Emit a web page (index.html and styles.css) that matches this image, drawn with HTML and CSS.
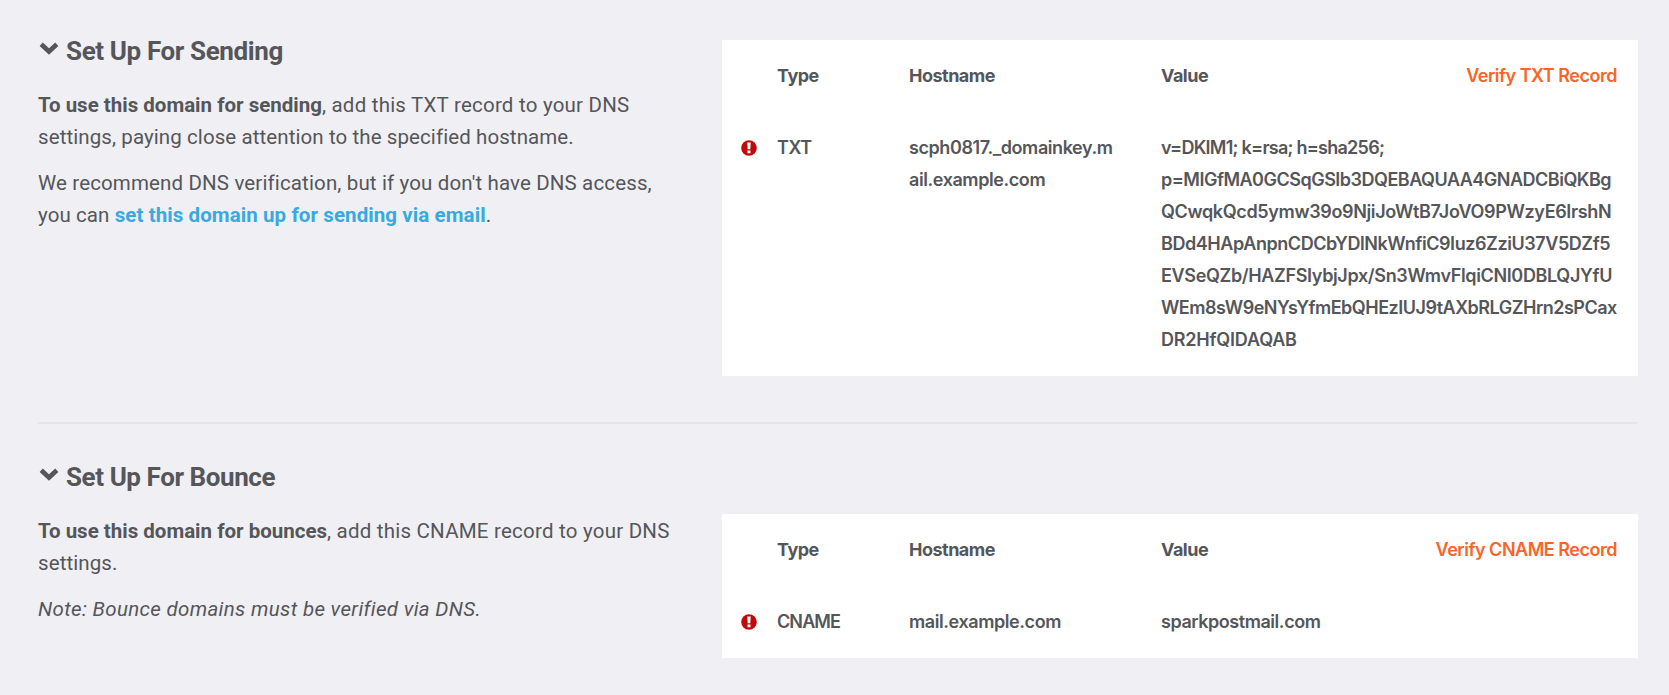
FILE: index.html
```html
<!DOCTYPE html>
<html lang="en">
<head>
<meta charset="utf-8">
<title>Domain setup</title>
<link rel="stylesheet" href="styles.css">
</head>
<body>
<main class="page">
  <section class="setup">
    <div class="info">
      <h2 class="title title-sending"><svg class="chevron" width="20" height="13" viewBox="0 0 20 13"><path d="M2.2 2.2 10 9.5 17.8 2.2" fill="none" stroke="currentColor" stroke-width="4.6" stroke-linecap="butt"/></svg>Set Up For Sending</h2>
      <p class="text"><strong>To use this domain for sending</strong><span class="loose">, add this TXT record to your DNS</span><br><span class="even">settings, paying close attention to the specified hostname.</span></p>
      <p class="text"><span class="mid">We recommend DNS verification, but if you don't have DNS access,</span><br><span class="even">you can </span><a class="link" href="#">set this domain up for sending via email</a>.</p>
    </div>
    <div class="card">
      <div class="row head">
        <span></span><span>Type</span><span>Hostname</span><span>Value</span><a class="verify" href="#">Verify TXT Record</a>
      </div>
      <div class="row">
        <svg class="alert" width="16" height="16" viewBox="0 0 16 16"><circle cx="8" cy="8" r="7.8" fill="#c20a0c"/><path d="M6.3 2.6h3.4l-.4 6.7H6.7zM6.5 10.6h3v2.7h-3z" fill="#fff"/></svg>
        <span>TXT</span>
        <span class="host">scph0817._domainkey.m<br>ail.example.com</span>
        <span class="value"><span class="intro">v=DKIM1; k=rsa; h=sha256;</span><br><span class="k1">p=MIGfMA0GCSqGSIb3DQEBAQUAA4GNADCBiQKBg</span><br><span class="k2">QCwqkQcd5ymw39o9NjiJoWtB7JoVO9PWzyE6IrshN</span><br><span class="k3">BDd4HApAnpnCDCbYDlNkWnfiC9Iuz6ZziU37V5DZf5</span><br><span class="k2">EVSeQZb/HAZFSIybjJpx/Sn3WmvFlqiCNI0DBLQJYfU</span><br><span class="k1">WEm8sW9eNYsYfmEbQHEzIUJ9tAXbRLGZHrn2sPCax</span><br><span class="k4">DR2HfQIDAQAB</span></span>
      </div>
    </div>
  </section>
  <hr class="rule">
  <section class="setup bounce">
    <div class="info">
      <h2 class="title title-bounce"><svg class="chevron" width="20" height="13" viewBox="0 0 20 13"><path d="M2.2 2.2 10 9.5 17.8 2.2" fill="none" stroke="currentColor" stroke-width="4.6" stroke-linecap="butt"/></svg>Set Up For Bounce</h2>
      <p class="text"><strong>To use this domain for bounces</strong><span class="loose">, add this CNAME record to your DNS</span><br><span class="even">settings.</span></p>
      <p class="text note">Note: Bounce domains must be verified via DNS.</p>
    </div>
    <div class="card">
      <div class="row head">
        <span></span><span>Type</span><span>Hostname</span><span>Value</span><a class="verify" href="#">Verify CNAME Record</a>
      </div>
      <div class="row">
        <svg class="alert" width="16" height="16" viewBox="0 0 16 16"><circle cx="8" cy="8" r="7.8" fill="#c20a0c"/><path d="M6.3 2.6h3.4l-.4 6.7H6.7zM6.5 10.6h3v2.7h-3z" fill="#fff"/></svg>
        <span class="cname">CNAME</span>
        <span class="host">mail.example.com</span>
        <span class="value mail">sparkpostmail.com</span>
      </div>
    </div>
  </section>
</main>
</body>
</html>
```
FILE: styles.css
```css
* { box-sizing: border-box; }

body {
  margin: 0;
  background: #f0eff4;
  color: #55565a;
  font-family: Roboto, "Open Sans", sans-serif;
}

a { text-decoration: none; }

.page { padding: 40px 31px 0 38px; }

.setup {
  display: grid;
  grid-template-columns: 684px 1fr;
  align-items: start;
}

.rule {
  height: 2px;
  margin: 46px 0 42px;
  border: 0;
  background: #e5e5e7;
}

.title {
  display: flex;
  align-items: flex-start;
  margin: -5px 0 22px;
  font-size: 26px;
  font-weight: 700;
  line-height: 32px;
}

.title-sending { letter-spacing: -0.38px; }
.title-bounce { letter-spacing: -0.42px; }

.chevron { margin: 7px 7px 0 1px; }

.text {
  margin: 0 0 14px;
  font-size: 20.5px;
  line-height: 32px;
  white-space: nowrap;
}

.text strong { font-weight: 700; letter-spacing: 0; }
.loose { letter-spacing: 0.22px; }
.mid { letter-spacing: 0.14px; }
.even { letter-spacing: 0.09px; }
.note { font-style: italic; letter-spacing: 0.33px; }

.link {
  color: #3aa9de;
  font-weight: 700;
  letter-spacing: 0.09px;
}

.card {
  padding: 20px 21px 20px 19px;
  background: #fff;
  font-family: Inter, Roboto, sans-serif;
  font-size: 18px;
  line-height: 32px;
}

.bounce .card { margin-top: 48px; }

.row {
  display: grid;
  grid-template-columns: 36px 132px 252px auto 1fr;
  font-weight: 600;
  letter-spacing: -0.5px;
  white-space: nowrap;
}

.head {
  margin-bottom: 40px;
  font-weight: 700;
}

.alert { margin-top: 8px; }

.verify {
  justify-self: end;
  color: #fa6428;
  font-weight: 600;
  letter-spacing: -0.48px;
}

.cname { letter-spacing: -0.9px; }
.host { letter-spacing: -0.42px; }
.intro { letter-spacing: -0.75px; }
.k1 { letter-spacing: -0.5px; }
.k2 { letter-spacing: -0.35px; }
.k3 { letter-spacing: -0.43px; }
.k4 { letter-spacing: -0.2px; }
.mail { letter-spacing: -0.45px; }
```
